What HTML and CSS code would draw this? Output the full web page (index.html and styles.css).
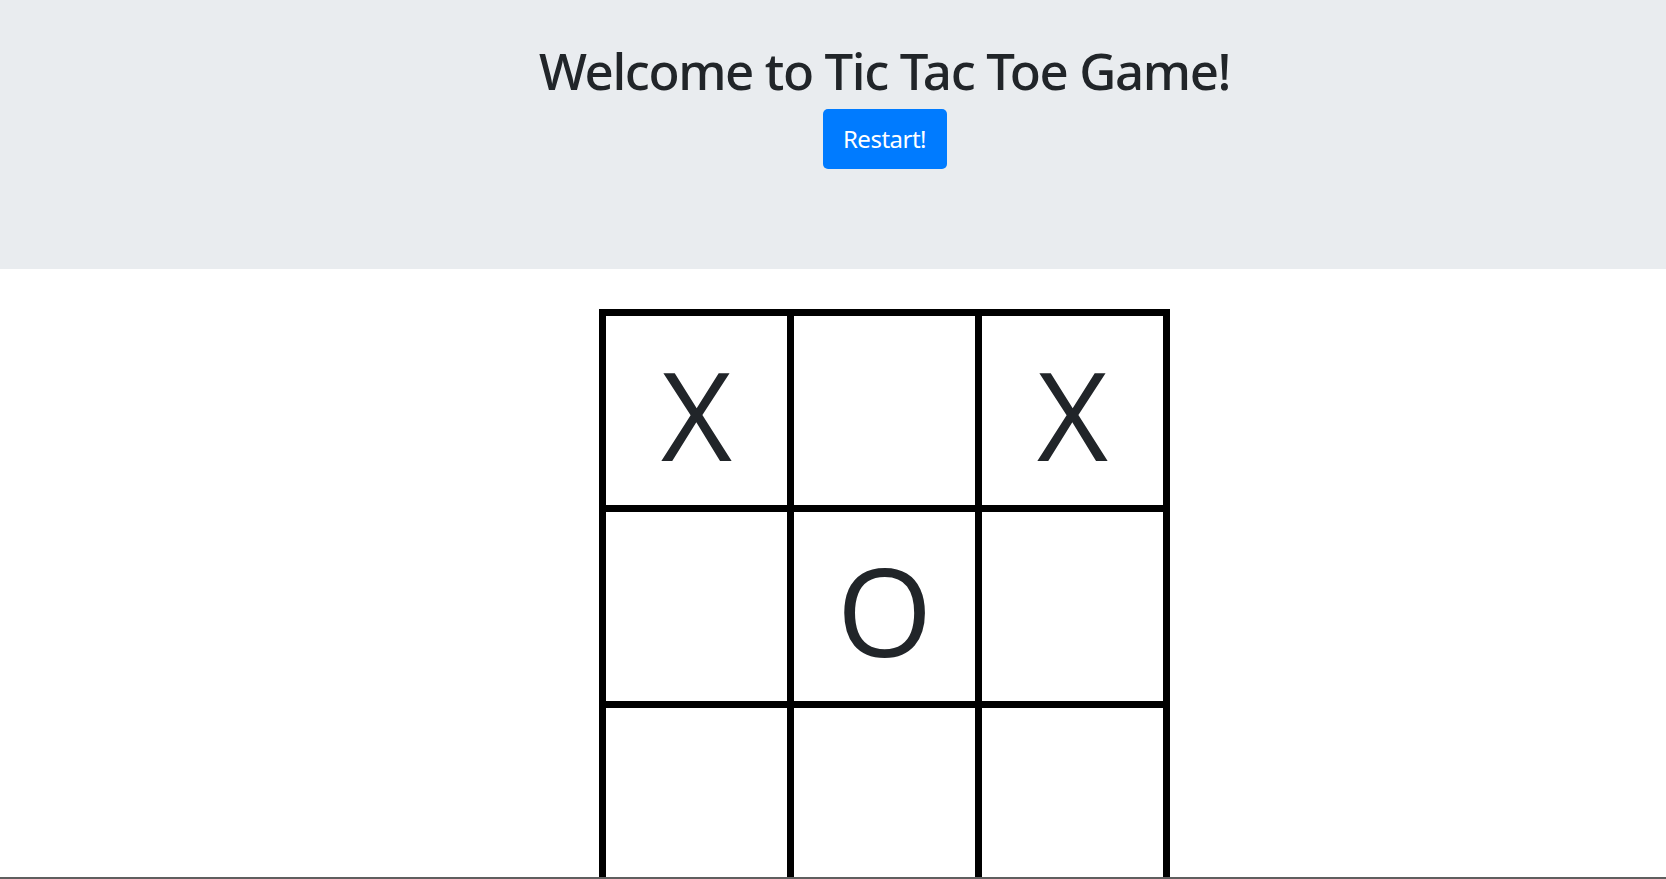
FILE: index.html
```html
<!DOCTYPE html>
<html lang="en">
<head>
<meta charset="utf-8">
<title>Tic Tac Toe</title>
<link rel="stylesheet" href="styles.css">
</head>
<body>
<div class="page">
  <header class="jumbo">
    <h1 class="title">Welcome to Tic Tac Toe Game!</h1>
    <button class="restart" type="button">Restart!</button>
  </header>
  <main class="board">
    <div class="cell"><span class="mark">X</span></div>
    <div class="cell"></div>
    <div class="cell"><span class="mark">X</span></div>
    <div class="cell"></div>
    <div class="cell"><span class="mark">O</span></div>
    <div class="cell"></div>
    <div class="cell"></div>
    <div class="cell"></div>
    <div class="cell"></div>
  </main>
</div>
<div class="edge"></div>
</body>
</html>
```

FILE: styles.css
```css
html, body {
  margin: 0;
  padding: 0;
  background: #ffffff;
  overflow: hidden;
}

body {
  font-family: "Open Sans", "Noto Sans", "Liberation Sans", sans-serif;
  color: #212529;
}

.page {
  padding-left: 103px;
}

.jumbo {
  background: #e9ecef;
  height: 269px;
  box-sizing: border-box;
  padding-top: 38px;
  text-align: center;
  margin-left: -103px;
  padding-left: 103px;
}

.title {
  margin: 0 0 7px 0;
  font-family: "Noto Sans", "Open Sans", sans-serif;
  font-size: 51px;
  line-height: 64px;
  font-weight: 500;
  letter-spacing: -1.4px;
  color: #212529;
}

.restart {
  display: inline-block;
  width: 124px;
  height: 60px;
  padding: 0;
  border: none;
  border-radius: 5px;
  background: #007bff;
  color: #ffffff;
  font-family: "Noto Sans", "Open Sans", sans-serif;
  font-size: 24px;
  letter-spacing: -0.5px;
  line-height: 60px;
}

.board {
  width: 571px;
  margin: 40px auto 0 auto;
  box-sizing: border-box;
  padding: 7px;
  background: #000000;
  display: grid;
  grid-template-columns: repeat(3, 181px);
  grid-template-rows: repeat(3, 189px);
  gap: 7px;
}

.cell {
  background: #ffffff;
  display: flex;
  align-items: center;
  justify-content: center;
  padding-top: 6px;
  box-sizing: border-box;
}

.mark {
  font-size: 123px;
  line-height: 1;
  color: #212529;
}

.edge {
  position: fixed;
  left: 0;
  right: 0;
  bottom: 0;
  height: 2px;
  background: #5f5f5f;
}
```
